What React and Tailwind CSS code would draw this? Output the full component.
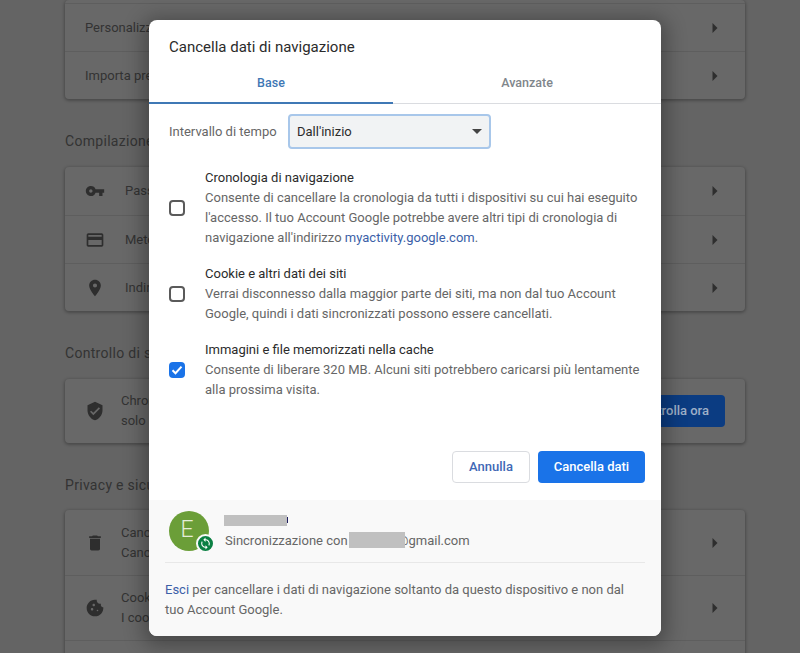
import { MdVpnKey, MdCreditCard, MdLocationOn, MdVerifiedUser, MdDelete, MdCookie, MdSync } from "react-icons/md";

function Arrow() {
  return (
    <svg width="6" height="10" viewBox="0 0 6 10" className="shrink-0">
      <path d="M0.5 0 L5.5 5 L0.5 10 Z" fill="#2e2e2e" />
    </svg>
  );
}

function Row({ icon: Icon, title, sub, h = "h-12", border = true, right, iconGap = "mr-5" }) {
  return (
    <div className={`flex items-center ${h} pl-5 pr-[27px] ${border ? "border-t border-[#5e5e5e]" : ""}`}>
      {Icon && <Icon size={20} className={`${iconGap} shrink-0 text-[#2e2e2e]`} />}
      <div className="flex-1 text-[13px] leading-5 text-[#333333]">
        <div>{title}</div>
        {sub && <div>{sub}</div>}
      </div>
      {right || <Arrow />}
    </div>
  );
}

function Card({ children }) {
  return <div className="rounded bg-[#686868] shadow-[0_1px_3px_1px_rgba(0,0,0,0.25)]">{children}</div>;
}

function Heading({ children }) {
  return <h2 className="mt-8 mb-4 h-5 text-[14px] leading-5 tracking-[0.3px] text-[#333333]">{children}</h2>;
}

function Settings() {
  return (
    <div className="ml-[65px] w-[680px]">
      <Card>
        <div className="h-[3px]" />
        <Row title="Personalizzazione" />
        <Row title="Importa preferiti e impostazioni" />
      </Card>
      <Heading>Compilazione automatica</Heading>
      <Card>
        <Row icon={MdVpnKey} title="Password" border={false} />
        <Row icon={MdCreditCard} title="Metodi di pagamento" />
        <Row icon={MdLocationOn} title="Indirizzi e altro" />
      </Card>
      <Heading>Controllo di sicurezza</Heading>
      <Card>
        <Row
          icon={MdVerifiedUser}
          iconGap="mr-4"
          title="Chrome può contribuire a proteggerti da violazioni dei dati,"
          sub="solo estensioni dannose e altro"
          h="h-16"
          border={false}
          right={
            <button className="-mr-[7px] h-8 w-[106px] shrink-0 rounded bg-[#0b3c82] pr-4 text-right text-[13px] font-medium text-[#9fb0c8]">
              Controlla ora
            </button>
          }
        />
      </Card>
      <h2 className="mt-8 mb-[15px] h-5 text-[14px] leading-5 tracking-[0.3px] text-[#333333]">Privacy e sicurezza</h2>
      <Card>
        <Row icon={MdDelete} iconGap="mr-4" title="Cancella dati di navigazione" sub="Cancella cronologia, cookie, cache e altro" h="h-[65px]" border={false} />
        <Row icon={MdCookie} iconGap="mr-4" title="Cookie e altri dati dei siti" sub="I cookie di terze parti sono bloccati" h="h-[65px]" />
        <div className="h-[65px] border-t border-[#5e5e5e]" />
      </Card>
    </div>
  );
}

function Option({ title, checked, children }) {
  return (
    <div className="flex items-center">
      {checked ? (
        <div className="flex h-4 w-4 shrink-0 items-center justify-center rounded-sm bg-[#1a73e8]">
          <svg width="12" height="10" viewBox="0 0 12 10">
            <path d="M1.5 5.2 L4.5 8.2 L10.5 1.6" fill="none" stroke="#fff" strokeWidth="2" />
          </svg>
        </div>
      ) : (
        <div className="h-4 w-4 shrink-0 rounded-sm border-2 border-[#5a5a5a]" />
      )}
      <div className="ml-5 text-[13px] leading-5 text-[#666666]">
        <div className="text-[#2b2b2b]">{title}</div>
        {children}
      </div>
    </div>
  );
}

function Dialog() {
  return (
    <div className="absolute left-[149px] top-5 flex h-[616px] w-[512px] flex-col overflow-hidden rounded-lg bg-white shadow-[0_4px_20px_6px_rgba(0,0,0,0.3)]">
      <h1 className="px-5 pt-[17px] text-[15px] leading-5 text-[#2b2b2b]">Cancella dati di navigazione</h1>

      {/* Tabs */}
      <div className="mt-2 flex h-[39px] border-b border-[#dadce0] text-[12.5px] font-medium">
        <div className="-mb-px flex w-[244px] items-center justify-center border-b-2 border-[#3f78b5] text-[#3f78b5]">Base</div>
        <div className="flex flex-1 items-center justify-center pb-0.5 text-[#80868b]">Avanzate</div>
      </div>

      <div className="mt-[10px] flex items-center px-5">
        <span className="w-[119px] text-[13px] text-[#666666]">Intervallo di tempo</span>
        <div className="flex h-[35px] w-[203px] items-center justify-between rounded border-2 border-[#a8c7ea] bg-[#f1f3f4] pl-[7px] pr-[7px] text-[13px] text-[#2b2b2b]">
          <span>Dall'inizio</span>
          <svg width="10" height="5" viewBox="0 0 10 5">
            <path d="M0 0 H10 L5 5 Z" fill="#444444" />
          </svg>
        </div>
      </div>

      <div className="mt-[19px] flex flex-col gap-4 px-5">
        <Option title="Cronologia di navigazione">
          Consente di cancellare la cronologia da tutti i dispositivi su cui hai eseguito
          <br />
          l'accesso. Il tuo Account Google potrebbe avere altri tipi di cronologia di
          <br />
          navigazione all'indirizzo <span className="text-[#3c5fa8]">myactivity.google.com</span>.
        </Option>
        <Option title="Cookie e altri dati dei siti">
          Verrai disconnesso dalla maggior parte dei siti, ma non dal tuo Account
          <br />
          Google, quindi i dati sincronizzati possono essere cancellati.
        </Option>
        <Option title="Immagini e file memorizzati nella cache" checked>
          Consente di liberare 320 MB. Alcuni siti potrebbero caricarsi più lentamente
          <br />
          alla prossima visita.
        </Option>
      </div>

      <div className="mt-[51px] flex justify-end gap-2 px-4">
        <button className="h-8 w-[78px] rounded border border-[#dadce0] text-[13px] font-medium text-[#3f68b5]">Annulla</button>
        <button className="h-8 w-[107px] rounded bg-[#1a73e8] text-[13px] font-medium text-white">Cancella dati</button>
      </div>

      {/* Account */}
      <div className="mt-[17px] flex-1 bg-[#f9f9f9] px-4">
        <div className="flex h-[63px] items-center border-b border-[#e8e8e8] pl-1">
          <div className="relative flex h-10 w-10 shrink-0 items-center justify-center rounded-full bg-[#6b9e38] text-[23px] text-[#e4edd8]">
            <span className="-mt-0.5 -ml-1 font-light">E</span>
            <div className="absolute -bottom-[2px] -right-[6px] flex h-[19px] w-[19px] items-center justify-center rounded-full border-2 border-[#f9f9f9] bg-[#0b8043]">
              <MdSync size={13} className="text-white" />
            </div>
          </div>
          <div className="ml-4 text-[13px] leading-5 text-[#666666]">
            <div className="-ml-px flex h-5 items-center pb-0.5">
              <div className="h-[11px] w-[63px] bg-[#c0c0c0]" />
              <div className="h-[6px] w-px bg-[#202060]" />
            </div>
            <div className="relative">
              Sincronizzazione con <span className="ml-[46px]">@gmail.com</span>
              <div className="absolute left-[124px] top-px h-4 w-14 bg-[#c0c0c0]" />
            </div>
          </div>
        </div>
        <p className="pt-[17px] text-[13px] leading-5 text-[#666666]">
          <span className="text-[#3c5fa8]">Esci</span> per cancellare i dati di navigazione soltanto da questo dispositivo e non dal
          <br />
          tuo Account Google.
        </p>
      </div>
    </div>
  );
}

export default function App() {
  return (
    <div className="relative h-[653px] w-[800px] overflow-hidden bg-[#646464] font-['Roboto',sans-serif]">
      <Settings />
      <Dialog />
    </div>
  );
}
